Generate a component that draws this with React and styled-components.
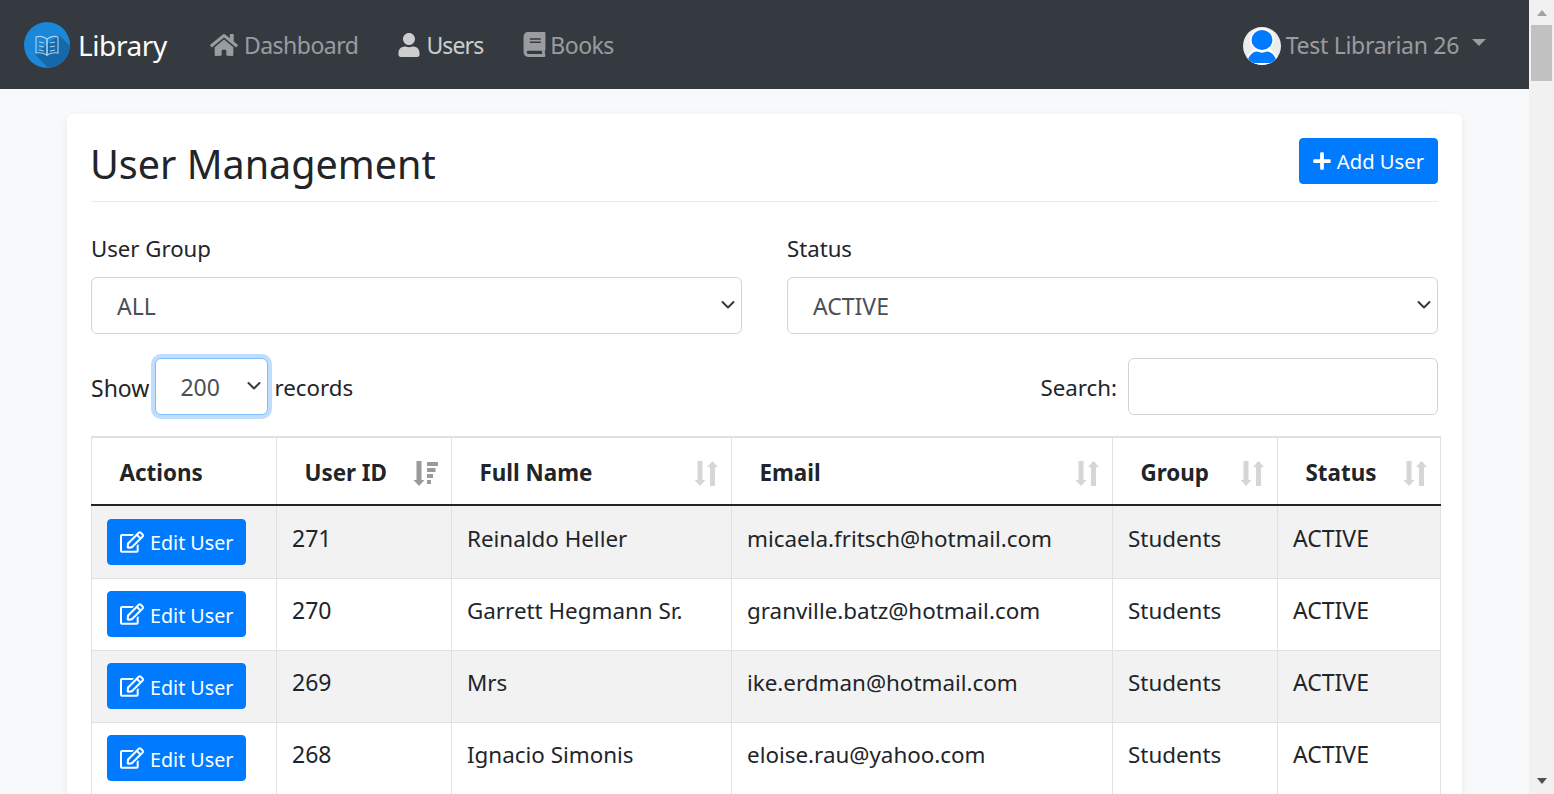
import React from "react";
import styled, { createGlobalStyle } from "styled-components";
import { FaHome, FaUser, FaBook, FaPlus, FaRegEdit } from "react-icons/fa";

const GlobalStyle = createGlobalStyle`
  html, body {
    margin: 0;
    height: 794px;
    overflow: hidden;
  }
  body {
    font-family: "Noto Sans", "Open Sans", "Liberation Sans", sans-serif;
    font-size: 22.4px;
    line-height: 36px;
    color: #212529;
  }
  * { box-sizing: border-box; }
`;

const Shell = styled.div`
  display: flex;
  width: 1554px;
  height: 794px;
  overflow: hidden;
`;
const Page = styled.div`
  flex: 1;
  min-width: 0;
  background: #f8f9fa;
`;
const Scrollbar = styled.div`
  width: 25px;
  background: #f1f1f1;
  display: flex;
  flex-direction: column;
  align-items: center;
`;
const ScrollUp = styled.div`
  width: 0;
  height: 0;
  margin-top: 10px;
  border-left: 5.5px solid transparent;
  border-right: 5.5px solid transparent;
  border-bottom: 6px solid #a3a3a3;
`;
const ScrollThumb = styled.div`
  width: 21px;
  height: 56px;
  margin-top: 9px;
  background: #c1c1c1;
`;
const ScrollDown = styled.div`
  width: 0;
  height: 0;
  margin-top: auto;
  margin-bottom: 10px;
  border-left: 5.5px solid transparent;
  border-right: 5.5px solid transparent;
  border-top: 6px solid #505050;
`;

const Navbar = styled.nav`
  height: 89px;
  background: #343a40;
  display: flex;
  align-items: center;
  padding: 0 43px 0 24px;
`;
const Brand = styled.div`
  display: flex;
  align-items: center;
  color: #fff;
  font-size: 28px;
  letter-spacing: -0.4px;
  gap: 8px;
  margin-right: 24px;
`;
const NavLinks = styled.div`
  display: flex;
  align-items: center;
  gap: 39px;
  margin-left: 19px;
`;
const NavLink = styled.div`
  display: flex;
  align-items: center;
  gap: ${(p) => p.$gap || 6}px;
  font-size: 23px;
  letter-spacing: ${(p) => (p.$active ? "-0.9px" : "-0.5px")};
  color: ${(p) => (p.$active ? "rgba(255,255,255,.75)" : "rgba(255,255,255,.5)")};
  svg { flex: none; }
`;
const UserMenu = styled.div`
  margin-left: auto;
  display: flex;
  align-items: center;
  gap: 6px;
  font-size: 23px;
  letter-spacing: -0.3px;
  color: rgba(255, 255, 255, 0.5);
  svg { margin: 2px -1px 0 0; }
`;
const Caret = styled.span`
  width: 0;
  height: 0;
  margin-left: 7px;
  margin-bottom: 5px;
  border-left: 7px solid transparent;
  border-right: 7px solid transparent;
  border-top: 7px solid rgba(255, 255, 255, 0.5);
`;

const Card = styled.main`
  margin: 25px 67px 0;
  background: #fff;
  border-radius: 6px 6px 0 0;
  box-shadow: 0 2px 8px rgba(0, 0, 0, 0.06);
  padding: 24px;
  height: 700px;
`;
const CardHead = styled.div`
  display: flex;
  justify-content: space-between;
  align-items: flex-start;
  height: 64px;
  border-bottom: 1px solid #e9ecef;
`;
const Title = styled.h1`
  margin: 0 0 0 -1px;
  font-size: 39.5px;
  font-weight: 400;
  line-height: 52px;
`;
const Button = styled.button`
  display: inline-flex;
  align-items: center;
  justify-content: center;
  gap: 5px;
  height: 46px;
  padding: 0 13px 0 12px;
  background: #007bff;
  border: 1px solid #007bff;
  border-radius: 4px;
  color: #fff;
  font-family: inherit;
  font-size: 20.2px;
  white-space: nowrap;
`;
const EditButton = styled(Button)`
  padding-top: 2px;
  padding-right: 12px;
  gap: 6px;
  font-size: 19.7px;
  svg { margin-top: -2px; }
`;

const Filters = styled.div`
  display: grid;
  grid-template-columns: 651px 651px;
  justify-content: space-between;
  margin-top: 28px;
`;
const Field = styled.div`
  display: flex;
  flex-direction: column;
  gap: 10px;
`;
const Label = styled.label`
  font-size: 22.2px;
  line-height: 36px;
  height: 37px;
  padding-top: 1px;
`;
const Select = styled.div`
  position: relative;
  display: flex;
  align-items: center;
  height: 57px;
  width: ${(p) => (p.$small ? "113px" : "100%")};
  padding-left: ${(p) => (p.$small ? "24px" : "25px")};
  background: #fff;
  border: 1px solid ${(p) => (p.$focus ? "#80bdff" : "#ced4da")};
  border-radius: 6px;
  color: #495057;
  font-size: 23px;
  box-shadow: ${(p) => (p.$focus ? "0 0 0 4px rgba(0,123,255,.25)" : "none")};
`;
const Chevron = styled.svg`
  position: absolute;
  right: 5px;
  top: 50%;
  margin-top: -9px;
  width: 16px;
  height: 16px;
`;

const Controls = styled.div`
  display: flex;
  justify-content: space-between;
  align-items: center;
  margin-top: 24px;
`;
const ControlGroup = styled.div`
  display: flex;
  align-items: center;
  gap: 6px;
`;
const ControlText = styled.span`
  margin-top: 3px;
  font-size: ${(p) => (p.$wide ? "23px" : "22.3px")};
`;
const SearchBox = styled.div`
  width: 310px;
  height: 57px;
  margin-left: 5px;
  background: #fff;
  border: 1px solid #ced4da;
  border-radius: 6px;
`;

const Table = styled.table`
  width: 1349px;
  margin-top: 21px;
  border-collapse: collapse;
  table-layout: fixed;
  border-top: 2px solid #dee2e6;
  tbody tr:first-child td { height: 73px; }
`;
const Th = styled.th`
  position: relative;
  height: 68px;
  padding: 4px 0 0 27.5px;
  border: 1px solid #dee2e6;
  border-top: none;
  border-bottom: 2px solid #212529;
  font-size: 22.4px;
  font-weight: 700;
  text-align: left;
`;
const SortIcon = styled.svg`
  position: absolute;
  right: 13px;
  top: 50%;
  margin-top: -10px;
  width: ${(p) => p.$width}px;
  height: 25px;
`;
const Tr = styled.tr`
  background: ${(p) => (p.$odd ? "#f2f2f2" : "#fff")};
`;
const Td = styled.td`
  height: 72px;
  padding: 0 0 ${(p) => (p.$wide ? 9 : 7)}px 15px;
  border: 1px solid #dee2e6;
  white-space: nowrap;
  font-size: ${(p) => (p.$wide ? "23px" : "22.4px")};
  tr:first-child > & { padding-bottom: ${(p) => (p.$wide ? 7 : 5)}px; }
`;
const ActionTd = styled.td`
  height: 72px;
  padding: 0 0 0 15px;
  border: 1px solid #dee2e6;
`;

const LogoMark = () => (
  <svg width="46" height="46" viewBox="0 0 46 46">
    <defs>
      <clipPath id="logoClip">
        <circle cx="23" cy="23" r="23" />
      </clipPath>
    </defs>
    <circle cx="23" cy="23" r="23" fill="#1a87d8" />
    <path d="M11 32 L23 45 L46 46 L46 24 L35 13 Z" fill="#1668a8" clipPath="url(#logoClip)" />
    <g fill="none" stroke="#a9d3f2" strokeWidth="1.1">
      <path d="M12 15 q6 -2 11 2 v16 q-5 -3 -11 -2 z" />
      <path d="M34 15 q-6 -2 -11 2 v16 q5 -3 11 -2 z" />
      <path d="M15 20 l5 1 M15 24 l5 1 M15 28 l5 1 M31 20 l-5 1 M31 24 l-5 1 M31 28 l-5 1" />
    </g>
  </svg>
);

const Avatar = () => (
  <svg width="38" height="38" viewBox="0 0 38 38">
    <defs>
      <clipPath id="avatarClip">
        <circle cx="19" cy="19" r="19" />
      </clipPath>
    </defs>
    <circle cx="19" cy="19" r="19" fill="#ececec" />
    <g clipPath="url(#avatarClip)">
      <path d="M0 34 L12 20 L26 20 L38 34 L38 38 L0 38 Z" fill="#fff" />
      <circle cx="19" cy="13" r="12" fill="#fff" />
      <ellipse cx="19" cy="13" rx="10.5" ry="10" fill="#007bff" />
      <path d="M4 36 C5 29 10 24.5 14 24.5 C17 26 21 26 24 24.5 C28 24.5 33 29 34 36 Z" fill="#007bff" />
    </g>
  </svg>
);

const ChevronIcon = () => (
  <Chevron viewBox="0 0 16 16">
    <path d="M2.5 5 L8 10.5 L13.5 5" fill="none" stroke="#343a40" strokeWidth="2" strokeLinecap="round" strokeLinejoin="round" />
  </Chevron>
);

const SortArrows = () => (
  <SortIcon $width={24} viewBox="0 0 24 25" fill="#d6d6d6">
    <path d="M3.5 0 h5 v19 h3 l-5.5 6 l-5.5 -6 h3 z" />
    <path d="M18.5 0 l5.5 6 h-3 v19 h-5 v-19 h-3 z" />
  </SortIcon>
);

const SortedDown = () => (
  <SortIcon $width={25} viewBox="0 0 25 25" fill="#9a9a9a">
    <path d="M3.5 0 h5 v19 h3 l-5.5 6 l-5.5 -6 h3 z" />
    <path d="M14 1 h11 v4 h-11 z M14 7 h8.5 v4 h-8.5 z M14 13 h6 v4 h-6 z M14 19 h4 v4 h-4 z" />
  </SortIcon>
);

const rows = [
  ["271", "Reinaldo Heller", "micaela.fritsch@hotmail.com"],
  ["270", "Garrett Hegmann Sr.", "granville.batz@hotmail.com"],
  ["269", "Mrs", "ike.erdman@hotmail.com"],
  ["268", "Ignacio Simonis", "eloise.rau@yahoo.com"],
];

const columns = [185, 175, 280, 381, 165, 163];

export default function App() {
  return (
    <>
      <GlobalStyle />
      <Shell>
        <Page>
          <Navbar>
            <Brand>
              <LogoMark />
              Library
            </Brand>
            <NavLinks>
              <NavLink>
                <FaHome size={28} />
                Dashboard
              </NavLink>
              <NavLink $active $gap={5}>
                <FaUser size={24} />
                Users
              </NavLink>
              <NavLink $gap={3}>
                <FaBook size={25} />
                Books
              </NavLink>
            </NavLinks>
            <UserMenu>
              <Avatar />
              Test Librarian 26
              <Caret />
            </UserMenu>
          </Navbar>
          <Card>
            <CardHead>
              <Title>User Management</Title>
              <Button>
                <FaPlus size={20} />
                Add User
              </Button>
            </CardHead>
            <Filters>
              <Field>
                <Label>User Group</Label>
                <Select>
                  ALL
                  <ChevronIcon />
                </Select>
              </Field>
              <Field>
                <Label>Status</Label>
                <Select>
                  ACTIVE
                  <ChevronIcon />
                </Select>
              </Field>
            </Filters>
            <Controls>
              <ControlGroup>
                <ControlText $wide>Show</ControlText>
                <Select $small $focus>
                  200
                  <ChevronIcon />
                </Select>
                <ControlText>records</ControlText>
              </ControlGroup>
              <ControlGroup>
                <ControlText>Search:</ControlText>
                <SearchBox />
              </ControlGroup>
            </Controls>
            <Table>
              <colgroup>
                {columns.map((w, i) => (
                  <col key={i} style={{ width: w }} />
                ))}
              </colgroup>
              <thead>
                <tr>
                  <Th>Actions</Th>
                  <Th>
                    User ID
                    <SortedDown />
                  </Th>
                  <Th>
                    Full Name
                    <SortArrows />
                  </Th>
                  <Th>
                    Email
                    <SortArrows />
                  </Th>
                  <Th>
                    Group
                    <SortArrows />
                  </Th>
                  <Th>
                    Status
                    <SortArrows />
                  </Th>
                </tr>
              </thead>
              <tbody>
                {rows.map((r, i) => (
                  <Tr key={r[0]} $odd={i % 2 === 0}>
                    <ActionTd>
                      <EditButton>
                        <FaRegEdit size={24} />
                        Edit User
                      </EditButton>
                    </ActionTd>
                    <Td $wide>{r[0]}</Td>
                    <Td>{r[1]}</Td>
                    <Td>{r[2]}</Td>
                    <Td>Students</Td>
                    <Td $wide>ACTIVE</Td>
                  </Tr>
                ))}
              </tbody>
            </Table>
          </Card>
        </Page>
        <Scrollbar>
          <ScrollUp />
          <ScrollThumb />
          <ScrollDown />
        </Scrollbar>
      </Shell>
    </>
  );
}
